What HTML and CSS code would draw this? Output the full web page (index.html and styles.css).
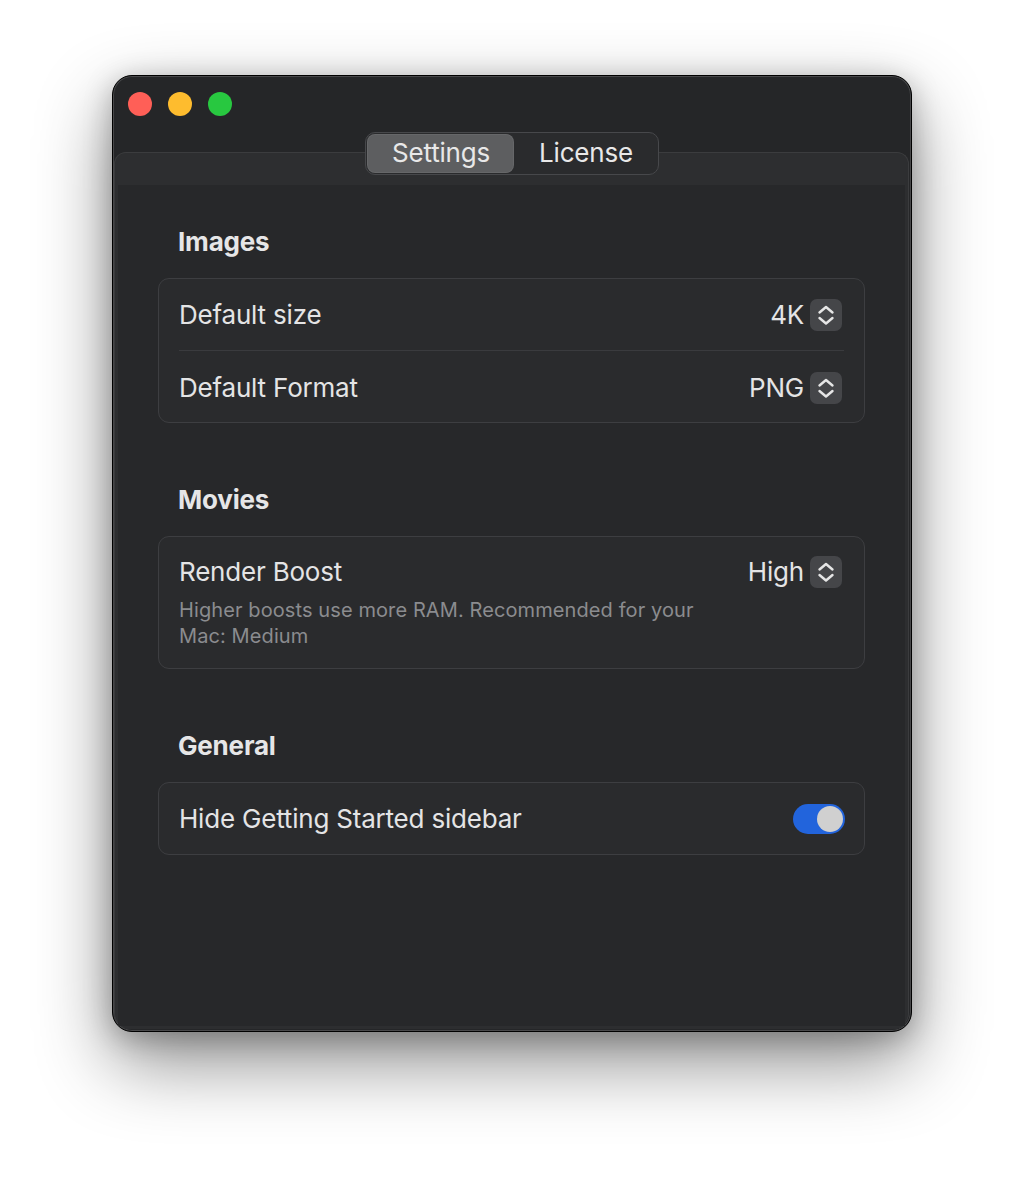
FILE: index.html
```html
<!DOCTYPE html>
<html lang="en">
<head>
    <meta charset="UTF-8">
    <meta name="viewport" content="width=device-width, initial-scale=1.0">
    <title>Settings</title>
    <link rel="stylesheet" href="styles.css">
</head>
<body>
    <div class="window">
        <div class="titlebar">
            <span class="light red"></span>
            <span class="light yellow"></span>
            <span class="light green"></span>
        </div>

        <div class="tabs">
            <div class="tab selected">Settings</div>
            <div class="tab">License</div>
        </div>

        <div class="tab-box">
            <div class="content">
                <h3 class="section-title">Images</h3>
                <div class="group">
                    <div class="row">
                        <span class="label">Default size</span>
                        <div class="value">
                            <span>4K</span>
                            <svg class="stepper" width="32" height="32" viewBox="0 0 32 32">
                                <rect width="32" height="32" rx="7" fill="#454649"/>
                                <path d="M9.5 13.5 L16 8 L22.5 13.5 M9.5 19 L16 24.5 L22.5 19" fill="none" stroke="#e6e6e6" stroke-width="2.4" stroke-linecap="round" stroke-linejoin="round"/>
                            </svg>
                        </div>
                    </div>
                    <div class="row divided">
                        <span class="label">Default Format</span>
                        <div class="value">
                            <span>PNG</span>
                            <svg class="stepper" width="32" height="32" viewBox="0 0 32 32">
                                <rect width="32" height="32" rx="7" fill="#454649"/>
                                <path d="M9.5 13.5 L16 8 L22.5 13.5 M9.5 19 L16 24.5 L22.5 19" fill="none" stroke="#e6e6e6" stroke-width="2.4" stroke-linecap="round" stroke-linejoin="round"/>
                            </svg>
                        </div>
                    </div>
                </div>

                <h3 class="section-title spaced">Movies</h3>
                <div class="group">
                    <div class="row tall">
                        <div class="label-col">
                            <span class="label">Render Boost</span>
                            <p class="desc">Higher boosts use more RAM. Recommended for your Mac: Medium</p>
                        </div>
                        <div class="value">
                            <span>High</span>
                            <svg class="stepper" width="32" height="32" viewBox="0 0 32 32">
                                <rect width="32" height="32" rx="7" fill="#454649"/>
                                <path d="M9.5 13.5 L16 8 L22.5 13.5 M9.5 19 L16 24.5 L22.5 19" fill="none" stroke="#e6e6e6" stroke-width="2.4" stroke-linecap="round" stroke-linejoin="round"/>
                            </svg>
                        </div>
                    </div>
                </div>

                <h3 class="section-title spaced">General</h3>
                <div class="group">
                    <div class="row">
                        <span class="label">Hide Getting Started sidebar</span>
                        <div class="toggle on"><span class="knob"></span></div>
                    </div>
                </div>
            </div>
        </div>
    </div>
</body>
</html>
```

FILE: styles.css
```css
body {
    margin: 0;
    padding: 75px 0 0;
    background-color: #fff;
    font-family: Inter, "Noto Sans", sans-serif;
    color: #e4e4e5;
    height: 1180px;
    box-sizing: border-box;
    overflow: hidden;
}
.window {
    width: 800px;
    height: 957px;
    margin: 0 auto;
    box-sizing: border-box;
    border: 1px solid #000;
    border-radius: 20px;
    background-color: #252628;
    box-shadow: inset 0 0 0 1px rgba(255, 255, 255, 0.16), 0 30px 75px rgba(0, 0, 0, 0.45), 0 6px 28px rgba(0, 0, 0, 0.25);
    display: flex;
    flex-direction: column;
}
.titlebar {
    display: flex;
    gap: 16px;
    padding: 16px 0 0 15px;
}
.light {
    width: 24px;
    height: 24px;
    border-radius: 50%;
}
.red { background-color: #ff5f57; }
.yellow { background-color: #febc2e; }
.green { background-color: #28c840; }

.tabs {
    align-self: center;
    display: flex;
    margin-top: 16px;
    height: 43px;
    box-sizing: border-box;
    padding: 1px;
    border: 1px solid #47484b;
    border-radius: 10px;
    background-color: #2a2b2d;
    position: relative;
    z-index: 1;
}
.tab {
    height: 39px;
    line-height: 38px;
    font-size: 26px;
    padding: 0 24px 0 25px;
    color: #e8e8e8;
    letter-spacing: -0.2px;
}
.tab.selected {
    background-color: #5d5e60;
    border-radius: 8px;
    box-shadow: inset 0 0 0 1px rgba(255, 255, 255, 0.06);
}

.tab-box {
    flex: 1;
    margin: -23px 2px 2px 1px;
    border: 1px solid #3b3c3e;
    border-bottom: none;
    border-radius: 12px 12px 16px 16px;
    background-color: #2d2e30;
    padding: 32px 3px 3px;
    display: flex;
}
.content {
    flex: 1;
    background-color: #27282a;
    padding: 41px 40px 0 40px;
}
.section-title {
    margin: 0 0 20px;
    padding-left: 20px;
    font-size: 26px;
    line-height: 32px;
    font-weight: 700;
    color: #e6e6e7;
    letter-spacing: -0.2px;
}
.section-title.spaced {
    margin-top: 61px;
}
.group {
    border: 1px solid #3d3e41;
    border-radius: 11px;
    background-color: #2a2b2d;
}
.row {
    display: flex;
    align-items: center;
    justify-content: space-between;
    margin: 0 20px;
    height: 71px;
    font-size: 26px;
    letter-spacing: -0.2px;
}
.row.divided {
    border-top: 1px solid #3a3b3e;
    height: 72px;
    box-sizing: border-box;
    padding-top: 3px;
}
.row.tall {
    height: auto;
    align-items: flex-start;
    padding: 19px 0 19px;
}
.label {
    line-height: 32px;
}
.label-col {
    display: flex;
    flex-direction: column;
}
.desc {
    margin: 9px 0 0;
    max-width: 545px;
    font-size: 20px;
    line-height: 26px;
    color: #8b8c8f;
    letter-spacing: 0.1px;
}
.value {
    display: flex;
    align-items: center;
    gap: 6px;
    margin-right: 2px;
    line-height: 32px;
}
.stepper {
    display: block;
}
.toggle {
    width: 52px;
    height: 30px;
    margin-right: -1px;
    border-radius: 15px;
    background-color: #444;
    box-sizing: border-box;
    padding: 2px;
    display: flex;
}
.toggle.on {
    background-color: #2264dc;
    justify-content: flex-end;
}
.knob {
    width: 26px;
    height: 26px;
    border-radius: 50%;
    background-color: #d0d0d0;
}
```
